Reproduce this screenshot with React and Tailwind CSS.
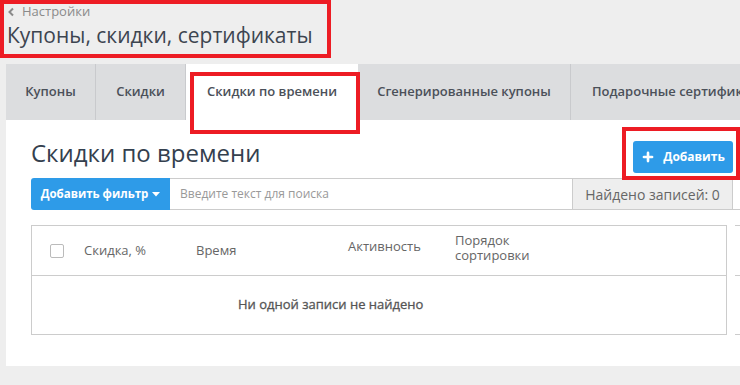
import { Plus } from "lucide-react";

const tabs = [
  { label: "Купоны", w: "w-[90px] justify-center" },
  { label: "Скидки", w: "w-[90px] justify-center" },
  { label: "Скидки по времени", w: "w-[172px] justify-center", active: true },
  { label: "Сгенерированные купоны", w: "w-[213px] justify-center" },
  { label: "Подарочные сертификаты", w: "w-[200px] justify-start pl-[21px]", last: true },
];

export default function App() {
  return (
    <div
      className="relative w-[740px] h-[385px] overflow-hidden bg-[#eeeeee]"
      style={{ fontFamily: '"Open Sans", "Liberation Sans", sans-serif' }}
    >
      {/* Header */}
      <div className="px-[7px] pt-[2px]">
        <div className="flex items-center gap-[7px] text-[13px] leading-[18px] text-[#8a8a8a]">
          <svg width="8" height="10" viewBox="0 0 8 10" className="mt-[1px]">
            <polyline points="6,1.5 2.5,5 6,8.5" fill="none" stroke="#8a8a8a" strokeWidth="2" />
          </svg>
          <span>Настройки</span>
        </div>
        <h1 className="text-[21px] leading-[30px] text-[#3d4550]">Купоны, скидки, сертификаты</h1>
      </div>

      {/* Tabs */}
      <div className="ml-[6px] mt-[14px] flex h-[56px] bg-[#dcdddf] whitespace-nowrap overflow-hidden">
        {tabs.map((t) => (
          <div
            key={t.label}
            className={`${t.w} shrink-0 flex items-center text-[13px] font-semibold text-[#4b5059] ${
              t.active ? "bg-white" : ""
            } ${t.active || t.last ? "" : "border-r border-[#c9cacd]"}`}
          >
            {t.label}
          </div>
        ))}
      </div>

      {/* Panel */}
      <div className="ml-[6px] bg-white pl-[25px] pr-[7px] pt-[15px] pb-[31px]">
        <div className="flex items-start justify-between">
          <h2 className="text-[24px] leading-[36px] text-[#34404e]">Скидки по времени</h2>
          <button className="mt-[6px] h-[32px] w-[100px] rounded-[3px] bg-[#2e9be8] flex items-center justify-center gap-[8px] text-white text-[12px] font-bold">
            <Plus size={14} strokeWidth={4.5} />
            Добавить
          </button>
        </div>

        {/* Filter row */}
        <div className="mt-[5px] flex h-[32px]">
          <button className="w-[139px] shrink-0 rounded-l-[3px] bg-[#2e9be8] flex items-center justify-center gap-[4px] text-white text-[11.5px] font-bold">
            Добавить фильтр
            <svg width="8" height="5" viewBox="0 0 8 5">
              <polygon points="0,0 8,0 4,4.5" fill="#fff" />
            </svg>
          </button>
          <div className="w-[403px] shrink-0 border border-l-0 border-[#cccccc] flex items-center px-[10px] text-[12px] text-[#999999]">
            Введите текст для поиска
          </div>
          <div className="w-[160px] shrink-0 border border-l-0 border-[#cccccc] bg-[#eeeeee] flex items-center justify-center text-[14px] text-[#666666]">
            Найдено записей: 0
          </div>
          <div className="flex-1 border-b border-[#cccccc] -mr-[7px]" />
        </div>

        {/* Table */}
        <div className="mt-[15px] flex">
          <div className="w-[696px] shrink-0 border border-[#cccccc] text-[13px] text-[#666666]">
            <div className="flex h-[50px] items-center border-b border-[#cccccc]">
              <div className="w-[52px] shrink-0 pl-[18px]">
                <span className="block w-[14px] h-[14px] border border-[#bbbbbb] rounded-[2px]" />
              </div>
              <div className="w-[112px] shrink-0">Скидка, %</div>
              <div className="w-[152px] shrink-0">Время</div>
              <div className="w-[107px] shrink-0 pb-[7px]">Активность</div>
              <div className="w-[90px] shrink-0 leading-[15px] pb-[6px]">Порядок сортировки</div>
            </div>
            <div className="h-[58px] flex items-center pl-[206px] text-[#555555] [-webkit-text-stroke:0.3px_#555555]">
              Ни одной записи не найдено
            </div>
          </div>
          <div className="ml-[8px] flex-1 -mr-[7px] flex flex-col">
            <div className="h-[51px] border-b border-[#cccccc] border-t" />
            <div className="h-[59px] border-b border-[#cccccc]" />
          </div>
        </div>
      </div>

      {/* Annotations */}
      <div className="absolute left-0 top-0 w-[331px] h-[58px] border-[4px] border-[#ed1c24]" />
      <div className="absolute left-[190px] top-[72px] w-[170px] h-[62px] border-[4px] border-[#ed1c24]" />
      <div className="absolute left-[622px] top-[127px] w-[118px] h-[53px] border-[4px] border-[#ed1c24]" />
    </div>
  );
}
